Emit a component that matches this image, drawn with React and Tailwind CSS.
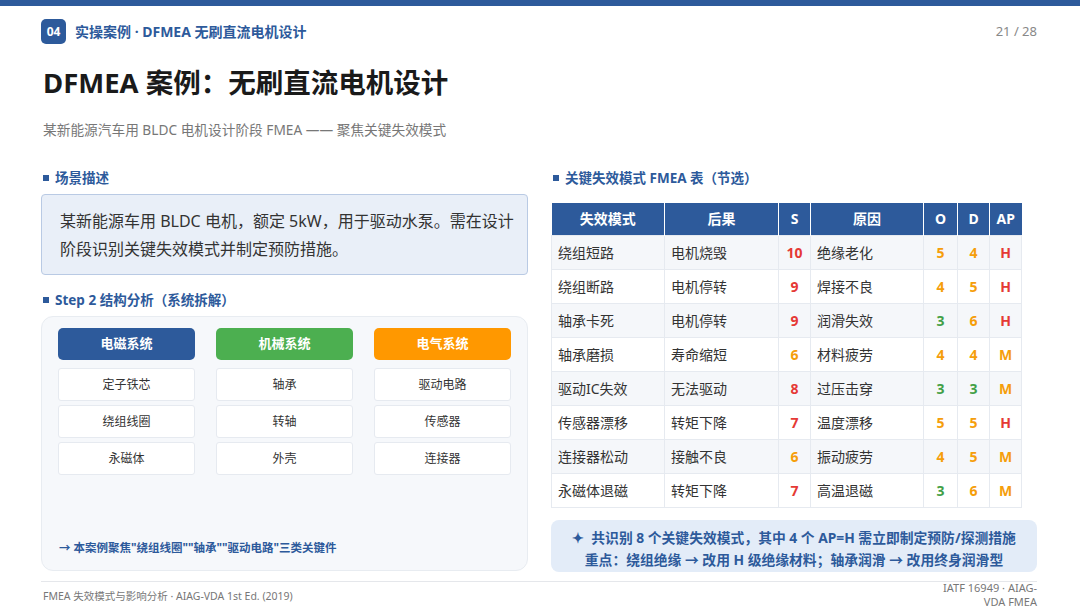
const BLUE = 'text-[#2d5a9b]';

const rows = [
  ['绕组短路', '电机烧毁', '10', '绝缘老化', '5', '4', 'H'],
  ['绕组断路', '电机停转', '9', '焊接不良', '4', '5', 'H'],
  ['轴承卡死', '电机停转', '9', '润滑失效', '3', '6', 'H'],
  ['轴承磨损', '寿命缩短', '6', '材料疲劳', '4', '4', 'M'],
  ['驱动IC失效', '无法驱动', '8', '过压击穿', '3', '3', 'M'],
  ['传感器漂移', '转矩下降', '7', '温度漂移', '5', '5', 'H'],
  ['连接器松动', '接触不良', '6', '振动疲劳', '4', '5', 'M'],
  ['永磁体退磁', '转矩下降', '7', '高温退磁', '3', '6', 'M'],
];

const systems = [
  { name: '电磁系统', head: 'bg-[#2d5a9b]', items: ['定子铁芯', '绕组线圈', '永磁体'] },
  { name: '机械系统', head: 'bg-[#4caf50]', items: ['轴承', '转轴', '外壳'] },
  { name: '电气系统', head: 'bg-[#ff9800]', items: ['驱动电路', '传感器', '连接器'] },
];

// colour for S / O / D ratings
const sevColor = (v) => (Number(v) >= 7 ? 'text-[#e53935]' : 'text-[#f59e0b]');
const occColor = (v) => (Number(v) <= 3 ? 'text-[#43a047]' : 'text-[#f59e0b]');
const apColor = (v) => (v === 'H' ? 'text-[#e53935]' : 'text-[#f59e0b]');

const SectionTitle = ({ children }) => (
  <div className={`flex items-center text-[13.5px] leading-[18px] font-bold ${BLUE}`}>
    <span className="inline-block w-[6px] h-[6px] bg-[#2d5a9b] ml-[2px] mr-[6px]" />
    {children}
  </div>
);

export default function App() {
  return (
    <div className="w-[1080px] h-[608px] overflow-hidden bg-white font-['Noto_Sans','Noto_Sans_CJK_SC',sans-serif] text-[#333]">
      <div className="h-[6px] bg-[#2d5a9b]" />

      <div className="pl-[41px] pr-[43px]">
        {/* header */}
        <div className="flex items-center justify-between pt-[13px]">
          <div className="flex items-center gap-[9px]">
            <div className="w-[25px] h-[25px] rounded-[5px] bg-[#2d5a9b] text-white text-[12px] font-bold flex items-center justify-center">
              04
            </div>
            <div className={`text-[14px] font-bold ${BLUE}`}>实操案例 · DFMEA 无刷直流电机设计</div>
          </div>
          <div className="text-[13px] text-[#888]">21 / 28</div>
        </div>

        <h1 className="mt-[21px] pl-[2px] text-[27.5px] leading-[36px] font-bold text-[#1a1a1a]">
          DFMEA 案例：无刷直流电机设计
        </h1>
        <p className="mt-[20px] pl-[2px] text-[13.7px] leading-[18px] text-[#777]">
          某新能源汽车用 BLDC 电机设计阶段 FMEA —— 聚焦关键失效模式
        </p>

        <div className="mt-[30px] flex gap-[23px]">
          {/* left column */}
          <div className="w-[487px] flex flex-col">
            <SectionTitle>场景描述</SectionTitle>
            <div className="mt-[7px] h-[81px] rounded-[4px] border border-[#b9cae4] bg-[#e9eff8] pl-[18px] pr-[8px] pt-[12px] text-[16px] leading-[28px] text-[#333]">
              某新能源车用 BLDC 电机，额定 5kW，用于驱动水泵。需在设计阶段识别关键失效模式并制定预防措施。
            </div>

            <div className="mt-[16px]">
              <SectionTitle>Step 2 结构分析（系统拆解）</SectionTitle>
            </div>
            <div className="mt-[7px] h-[255px] rounded-[12px] border border-[#e8ecf1] bg-[#f6f8fb] px-[16px] pt-[11px] pb-[14px] flex flex-col justify-between">
              <div className="grid grid-cols-3 gap-x-[21px]">
                {systems.map((s) => (
                  <div key={s.name} className="flex flex-col">
                    <div className={`h-[32px] rounded-[5px] ${s.head} text-white text-[13px] font-bold flex items-center justify-center`}>
                      {s.name}
                    </div>
                    <div className="mt-[8px] flex flex-col gap-[4px]">
                      {s.items.map((it) => (
                        <div key={it} className="h-[33px] rounded-[3px] border border-[#e6eaf0] bg-white text-[12px] flex items-center justify-center">
                          {it}
                        </div>
                      ))}
                    </div>
                  </div>
                ))}
              </div>
              <div className={`pl-[1px] text-[11.5px] font-bold ${BLUE}`}>
                → 本案例聚焦"绕组线圈""轴承""驱动电路"三类关键件
              </div>
            </div>
          </div>

          {/* right column */}
          <div className="flex-1 flex flex-col">
            <SectionTitle>关键失效模式 FMEA 表（节选）</SectionTitle>
            <table className="mt-[16px] w-[470px] border-collapse table-fixed text-[14px]">
              <colgroup>
                <col className="w-[113px]" />
                <col className="w-[114px]" />
                <col className="w-[32px]" />
                <col className="w-[113px]" />
                <col className="w-[34px]" />
                <col className="w-[32px]" />
                <col className="w-[32px]" />
              </colgroup>
              <thead>
                <tr className="h-[32px] bg-[#2d5a9b] text-white font-bold">
                  {['失效模式', '后果', 'S', '原因', 'O', 'D', 'AP'].map((h, i) => (
                    <th key={h} className={`p-0 text-center ${i > 0 ? 'border-l border-white' : ''}`}>{h}</th>
                  ))}
                </tr>
              </thead>
              <tbody>
                {rows.map((r, i) => (
                  <tr key={r[0]} className={`h-[34px] ${i % 2 === 0 ? 'bg-[#f5f7fa]' : 'bg-white'}`}>
                    <td className="px-[6px] border border-[#e6eaf0]">{r[0]}</td>
                    <td className="px-[6px] border border-[#e6eaf0]">{r[1]}</td>
                    <td className={`text-center font-bold border border-[#e6eaf0] ${sevColor(r[2])}`}>{r[2]}</td>
                    <td className="px-[6px] border border-[#e6eaf0]">{r[3]}</td>
                    <td className={`text-center font-bold border border-[#e6eaf0] ${occColor(r[4])}`}>{r[4]}</td>
                    <td className={`text-center font-bold border border-[#e6eaf0] ${occColor(r[5])}`}>{r[5]}</td>
                    <td className={`text-center font-bold border border-[#e6eaf0] ${apColor(r[6])}`}>{r[6]}</td>
                  </tr>
                ))}
              </tbody>
            </table>

            <div className={`mt-[12px] h-[52px] rounded-[8px] bg-[#e3ecf8] pt-[7px] text-center text-[13.8px] leading-[22px] font-bold ${BLUE}`}>
              <div>✦&nbsp; 共识别 8 个关键失效模式，其中 4 个 AP=H 需立即制定预防/探测措施</div>
              <div>重点：绕组绝缘 → 改用 H 级绝缘材料；轴承润滑 → 改用终身润滑型</div>
            </div>
          </div>
        </div>

        {/* footer */}
        <div className="mt-[9px] border-t border-[#e5e7eb] flex items-start justify-between">
          <div className="pl-[2px] pt-[6px] text-[10.5px] leading-[16px] text-[#777]">
            FMEA 失效模式与影响分析 · AIAG-VDA 1st Ed. (2019)
          </div>
          <div className="-mt-[1px] text-right text-[11px] leading-[14px] text-[#777]">
            IATF 16949 · AIAG-
            <br />
            VDA FMEA
          </div>
        </div>
      </div>
    </div>
  );
}
